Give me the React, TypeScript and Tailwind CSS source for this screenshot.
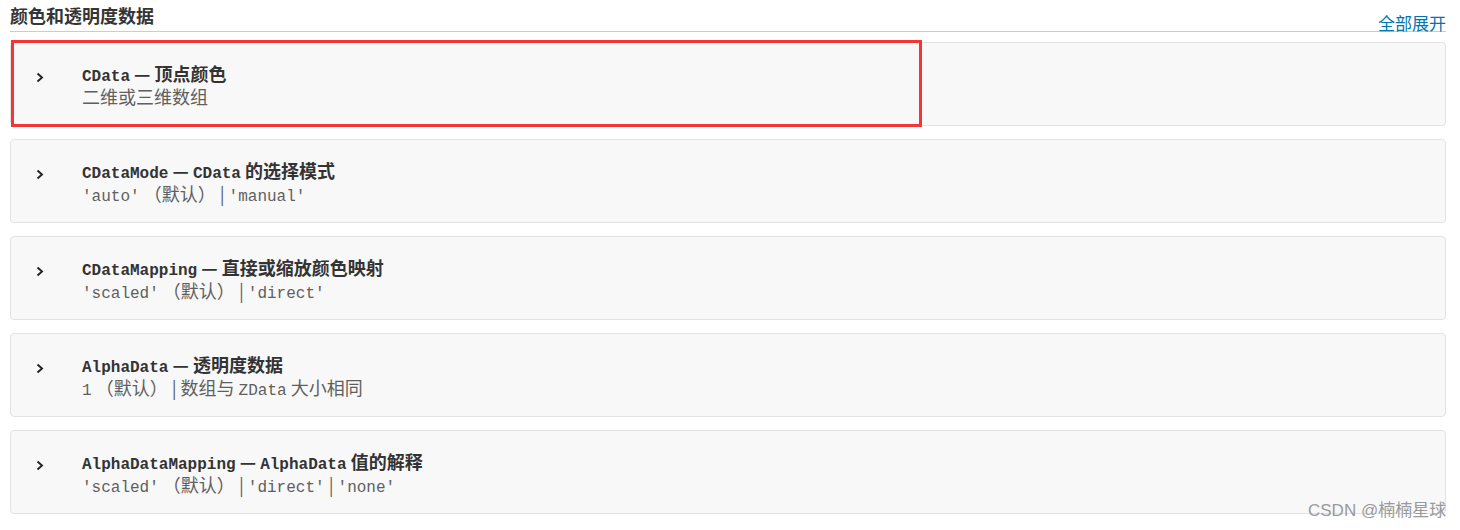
import React from "react";

type Seg = { t: string; m?: boolean };

const mono = "font-['Liberation_Mono','Noto_Sans_CJK_SC',monospace] text-[16px] leading-[21px]";
const cjk = "font-['Noto_Sans_CJK_SC','Noto_Sans',sans-serif] text-[18px] leading-[21px]";

function Line({ segs, className }: { segs: Seg[]; className: string }) {
  return (
    <div
      className={`h-[23px] font-['Noto_Sans_CJK_SC','Noto_Sans',sans-serif] text-[18px] leading-[23px] whitespace-pre ${className}`}
    >
      {segs.map((s, i) => (
        <span key={i} className={s.m ? mono : cjk}>
          {s.t}
        </span>
      ))}
    </div>
  );
}

const items: { title: Seg[]; sub: Seg[] }[] = [
  {
    title: [{ t: "CData", m: true }, { t: " — 顶点颜色" }],
    sub: [{ t: "二维或三维数组" }],
  },
  {
    title: [{ t: "CDataMode", m: true }, { t: " — " }, { t: "CData", m: true }, { t: " 的选择模式" }],
    sub: [{ t: "'auto'", m: true }, { t: " （默认） | " }, { t: "'manual'", m: true }],
  },
  {
    title: [{ t: "CDataMapping", m: true }, { t: " — 直接或缩放颜色映射" }],
    sub: [{ t: "'scaled'", m: true }, { t: " （默认） | " }, { t: "'direct'", m: true }],
  },
  {
    title: [{ t: "AlphaData", m: true }, { t: " — 透明度数据" }],
    sub: [{ t: "1", m: true }, { t: " （默认） | 数组与 " }, { t: "ZData", m: true }, { t: " 大小相同" }],
  },
  {
    title: [{ t: "AlphaDataMapping", m: true }, { t: " — " }, { t: "AlphaData", m: true }, { t: " 值的解释" }],
    sub: [
      { t: "'scaled'", m: true },
      { t: " （默认） | " },
      { t: "'direct'", m: true },
      { t: " | " },
      { t: "'none'", m: true },
    ],
  },
];

function Chevron() {
  return (
    <svg width="8" height="11" viewBox="0 0 8 11" className="block">
      <polyline points="1.5,1.5 6,5.5 1.5,9.5" fill="none" stroke="#222" strokeWidth="1.9" />
    </svg>
  );
}

function Card({ title, sub }: { title: Seg[]; sub: Seg[] }) {
  return (
    <div className="h-[84px] bg-[#f8f8f8] border border-[#e3e3e3] rounded-[4px] flex items-start pl-[25px] pt-[19px]">
      <div className="w-[46px] pt-[10px]">
        <Chevron />
      </div>
      <div className="flex flex-col">
        <Line segs={title} className="font-bold text-[#333333]" />
        <Line segs={sub} className="text-[#5f5f5f]" />
      </div>
    </div>
  );
}

export default function App() {
  return (
    <div className="relative w-[1460px] h-[530px] bg-white overflow-hidden">
      <div className="pl-[10px] w-[1446px]">
        <div className="h-[32px] border-b border-[#cccccc] flex items-end justify-between">
          <div className="font-['Noto_Sans_CJK_SC',sans-serif] text-[18px] font-bold text-[#353535] leading-[24px] pb-[4px]">
            颜色和透明度数据
          </div>
          <div className="font-['Noto_Sans_CJK_SC',sans-serif] text-[17px] text-[#0076b0] leading-[22px] -mb-[3px]">
            全部展开
          </div>
        </div>
        <div className="mt-[10px] flex flex-col gap-[13px]">
          {items.map((it, i) =>
            i === 0 ? (
              <div key={i} className="relative">
                <Card title={it.title} sub={it.sub} />
                <div className="absolute left-[1px] top-[-2px] w-[911px] h-[87px] border-[3px] border-[#f33535] pointer-events-none" />
              </div>
            ) : (
              <Card key={i} title={it.title} sub={it.sub} />
            )
          )}
        </div>
      </div>
      <div className="absolute left-[1308px] top-[500px] font-['Liberation_Sans','Noto_Sans_CJK_SC',sans-serif] text-[17px] leading-[22px] text-[#9a9a9a]">
        CSDN @楠楠星球
      </div>
    </div>
  );
}
